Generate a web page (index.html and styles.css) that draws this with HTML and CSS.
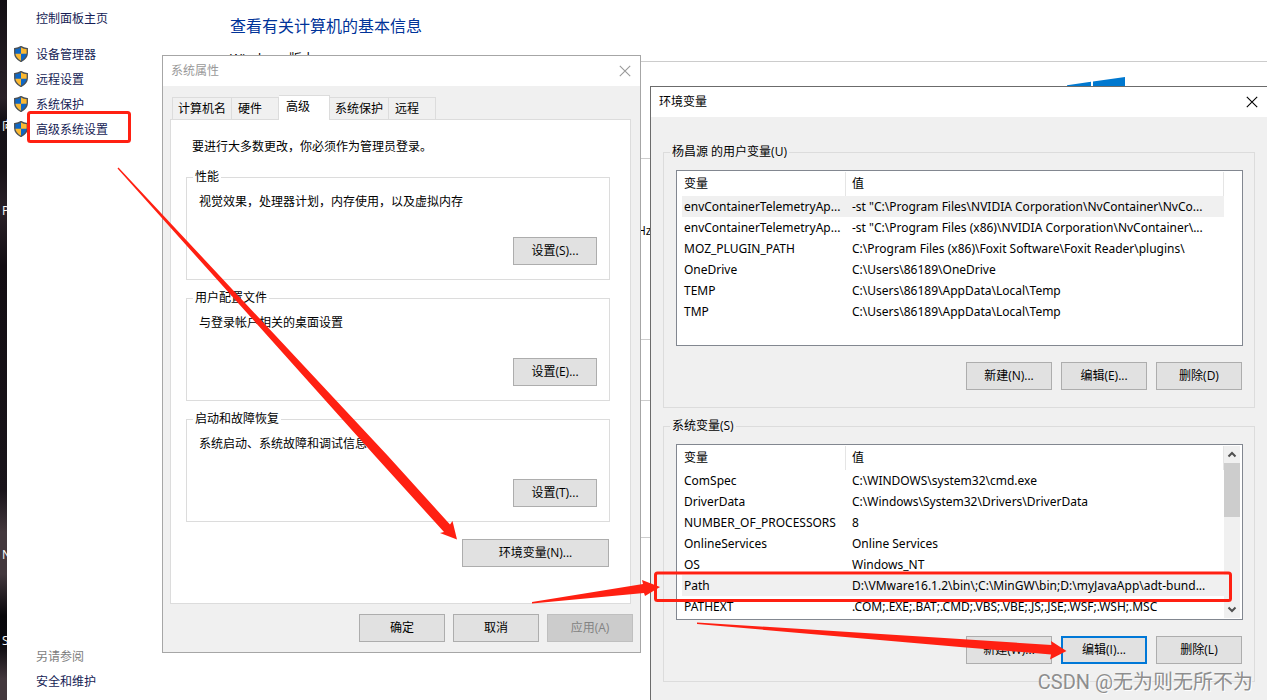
FILE: index.html
```html
<!DOCTYPE html>
<html lang="zh-CN">
<head>
<meta charset="utf-8">
<title>系统</title>
<link rel="stylesheet" href="styles.css">
</head>
<body>
<svg class="defs" aria-hidden="true">
  <symbol id="shield" viewBox="0 0 14 16">
    <path d="M7 0.6C5 2 3 2.5 0.7 2.6V7c0 4 2.600 6.500 6.300 8.500 3.700-2 6.300-4.500 6.300-8.500V2.600C11 2.500 9 2 7 .6z" fill="#fcb931"/>
    <path d="M7 .6C5 2 3 2.500.7 2.600V7.800H7z" fill="#0f67c4"/>
    <path d="M7 7.800h6.300C13 11.500 10.500 13.700 7 15.500z" fill="#0f67c4"/>
    <path d="M7 .6C5 2 3 2.500.7 2.600V7c0 4 2.600 6.500 6.300 8.500 3.700-2 6.300-4.500 6.300-8.500V2.600C11 2.500 9 2 7 .6z" fill="none" stroke="#4b5157" stroke-width="1.300"/>
  </symbol>
  <symbol id="cross" viewBox="0 0 12 12">
    <path d="M.8.8l10.400 10.400M11.200.8L.8 11.200" fill="none" stroke="currentColor" stroke-width="1.100"/>
  </symbol>
</svg>

<div class="screen">
  <div class="desktop">
    <span class="shortcut s1">向</span>
    <span class="shortcut s2">P</span>
    <span class="shortcut s3">N</span>
    <span class="shortcut s4">S</span>
  </div>

  <nav class="sidebar">
    <a class="home" href="#">控制面板主页</a>
    <ul class="tasks">
      <li><svg class="shield"><use href="#shield"/></svg><a href="#">设备管理器</a></li>
      <li><svg class="shield"><use href="#shield"/></svg><a href="#">远程设置</a></li>
      <li><svg class="shield"><use href="#shield"/></svg><a href="#">系统保护</a></li>
      <li><svg class="shield"><use href="#shield"/></svg><a href="#">高级系统设置</a></li>
    </ul>
    <div class="related">
      <span>另请参阅</span>
      <a href="#">安全和维护</a>
    </div>
  </nav>

  <main class="content">
    <h1>查看有关计算机的基本信息</h1>
    <section class="info edition">
      <h2>Windows 版本</h2>
      <svg class="winlogo" viewBox="0 0 58 58">
        <path d="M0 8.200L24 4.800V28H0zM26 4.500L58 0v28H26zM0 30h24v23.200L0 49.800zM26 30h32v28l-32-4.500z" fill="#0078cf"/>
      </svg>
    </section>
    <section class="info system"><p>Hz</p></section>
    <section class="info name"></section>
    <section class="info activation"></section>
    <section class="info"></section>
  </main>

  <section class="dialog props">
    <header class="titlebar inactive">
      <span>系统属性</span>
      <button class="close" aria-label="关闭"><svg><use href="#cross"/></svg></button>
    </header>
    <div class="tabs" role="tablist">
      <button role="tab">计算机名</button>
      <button role="tab" class="t2">硬件</button>
      <button role="tab" class="active" aria-selected="true">高级</button>
      <button role="tab">系统保护</button>
      <button role="tab" class="t2">远程</button>
    </div>
    <div class="pane">
      <p class="intro">要进行大多数更改，你必须作为管理员登录。</p>
      <fieldset>
        <legend>性能</legend>
        <p>视觉效果，处理器计划，内存使用，以及虚拟内存</p>
        <button class="btn">设置(S)...</button>
      </fieldset>
      <fieldset>
        <legend>用户配置文件</legend>
        <p>与登录帐户相关的桌面设置</p>
        <button class="btn">设置(E)...</button>
      </fieldset>
      <fieldset>
        <legend>启动和故障恢复</legend>
        <p>系统启动、系统故障和调试信息</p>
        <button class="btn">设置(T)...</button>
      </fieldset>
      <button class="btn envbtn">环境变量(N)...</button>
    </div>
    <footer class="actions">
      <button class="btn">确定</button>
      <button class="btn">取消</button>
      <button class="btn" disabled>应用(A)</button>
    </footer>
  </section>

  <section class="dialog env">
    <header class="titlebar">
      <span>环境变量</span>
      <button class="close" aria-label="关闭"><svg><use href="#cross"/></svg></button>
    </header>
    <div class="envbody">
      <fieldset>
        <legend>杨昌源 的用户变量(U)</legend>
        <div class="list">
          <table>
            <thead><tr><th class="var">变量</th><th>值</th></tr></thead>
            <tbody>
              <tr class="selected"><td>envContainerTelemetryAp...</td><td>-st "C:\Program Files\NVIDIA Corporation\NvContainer\NvCo...</td></tr>
              <tr><td>envContainerTelemetryAp...</td><td>-st "C:\Program Files (x86)\NVIDIA Corporation\NvContainer\...</td></tr>
              <tr><td>MOZ_PLUGIN_PATH</td><td>C:\Program Files (x86)\Foxit Software\Foxit Reader\plugins\</td></tr>
              <tr><td>OneDrive</td><td>C:\Users\86189\OneDrive</td></tr>
              <tr><td>TEMP</td><td>C:\Users\86189\AppData\Local\Temp</td></tr>
              <tr><td>TMP</td><td>C:\Users\86189\AppData\Local\Temp</td></tr>
            </tbody>
          </table>
        </div>
        <div class="actions">
          <button class="btn">新建(N)...</button>
          <button class="btn">编辑(E)...</button>
          <button class="btn">删除(D)</button>
        </div>
      </fieldset>
      <fieldset>
        <legend>系统变量(S)</legend>
        <div class="list">
          <table>
            <thead><tr><th class="var">变量</th><th>值</th></tr></thead>
            <tbody>
              <tr><td>ComSpec</td><td>C:\WINDOWS\system32\cmd.exe</td></tr>
              <tr><td>DriverData</td><td>C:\Windows\System32\Drivers\DriverData</td></tr>
              <tr><td>NUMBER_OF_PROCESSORS</td><td>8</td></tr>
              <tr><td>OnlineServices</td><td>Online Services</td></tr>
              <tr><td>OS</td><td>Windows_NT</td></tr>
              <tr class="selected"><td>Path</td><td>D:\VMware16.1.2\bin\;C:\MinGW\bin;D:\myJavaApp\adt-bund...</td></tr>
              <tr><td>PATHEXT</td><td>.COM;.EXE;.BAT;.CMD;.VBS;.VBE;.JS;.JSE;.WSF;.WSH;.MSC</td></tr>
            </tbody>
          </table>
          <div class="scrollbar">
            <svg viewBox="0 0 16 17"><path d="M4.500 10.500L8 7l3.500 3.500" fill="none" stroke="#505050" stroke-width="2"/></svg>
            <div class="thumb"></div>
            <svg class="down" viewBox="0 0 16 17"><path d="M4.500 6.500L8 10l3.500-3.500" fill="none" stroke="#505050" stroke-width="2"/></svg>
          </div>
        </div>
        <div class="actions">
          <button class="btn">新建(W)...</button>
          <button class="btn focused">编辑(I)...</button>
          <button class="btn">删除(L)</button>
        </div>
      </fieldset>
    </div>
  </section>

  <svg class="marks" width="1267" height="700" viewBox="0 0 1267 700" aria-hidden="true">
    <g fill="none" stroke="#ff2012" stroke-width="3">
      <rect x="28.500" y="112.500" width="101" height="29" rx="2"/>
      <rect x="655.500" y="573" width="575" height="27.500" rx="2"/>
    </g>
    <g fill="#ff2012">
      <path d="M117.500 168.500L118.500 167.500L388 456L450 524.500L452.500 521L457 539.500L440 533L444 532L376 457z"/>
      <path d="M532 602L643 584L642 580L660 587L645 596L644 593L532 603.500z"/>
      <path d="M697 622.500L960 639L1051.500 645L1051 641L1066.500 651L1050 659.500L1051 654.500L960 647L697 624z"/>
    </g>
  </svg>
  <div class="watermark">CSDN @无为则无所不为</div>
</div>
</body>
</html>
```

FILE: styles.css
```css
* { box-sizing: border-box; }

body {
  margin: 0;
  background: #fff;
  color: #000;
  font: 12px/16px "Open Sans", "Noto Sans CJK SC", sans-serif;
}

h1, h2, p, ul, fieldset, legend { margin: 0; padding: 0; font-weight: normal; }
ul { list-style: none; }
a { text-decoration: none; color: #151c55; }
button { font: inherit; color: inherit; }
.defs { position: absolute; width: 0; height: 0; }

.screen {
  position: relative;
  display: flex;
  height: 100vh;
  min-height: 700px;
  overflow: hidden;
}

/* desktop edge */
.desktop {
  position: relative;
  flex: none;
  width: 7px;
  overflow: hidden;
  background: linear-gradient(#120e13, #2a2228 14%, #151116 17%, #171217 24%, #2b2229 30%, #120d12 38%, #19141a 70%, #43383d 76%, #43383d 82%, #08070a 88%, #0b090d 92%, #43383d 97%);
  color: #fff;
}
.shortcut { position: absolute; left: 2px; }
.s1 { top: 118px; }
.s2 { top: 203px; }
.s3 { top: 547px; }
.s4 { top: 633px; }

/* control panel */
.sidebar {
  display: flex;
  flex-direction: column;
  flex: none;
  width: 193px;
  padding: 6px 0;
  line-height: 25px;
}
.home { padding-left: 29px; }
.tasks { padding-top: 11px; }
.tasks li { display: flex; align-items: center; gap: 8px; padding-left: 7px; }
.shield { width: 14px; height: 16px; margin-bottom: 2px; }
.related {
  display: flex;
  flex-direction: column;
  margin-top: auto;
  padding-left: 29px;
  color: #7d7d7d;
}
.content { flex: 1; padding: 14px 0 0 30px; }
.content h1 { font-size: 16px; line-height: 24px; color: #003399; }
.info { border-top: 1px solid #ccc; height: 137px; }
.edition { display: flex; height: 97px; margin-top: 23px; }
.edition h2 {
  align-self: flex-start;
  margin-top: -14px;
  padding-right: 8px;
  background: #fff;
  font-size: 13px;
  line-height: 20px;
}
.winlogo { width: 58px; height: 58px; margin: 15px 142px 0 auto; }
.system { height: 181px; padding: 64px 0 0 407px; }
.name { height: 61px; }

/* dialogs */
.dialog { position: absolute; background: #f0f0f0; }
.props { left: 162px; top: 55px; width: 479px; border: 1px solid #a6a6a6; }
.env {
  left: 650px;
  right: 0;
  top: 86px;
  bottom: 0;
  border: solid #6b6b6b;
  border-width: 1px 0 0 1px;
}
.titlebar {
  display: flex;
  align-items: center;
  justify-content: space-between;
  height: 30px;
  padding: 0 9px 0 8px;
  background: #fff;
}
.inactive { color: #999; }
.close { display: flex; padding: 0; border: 0; background: none; }
.close svg { width: 12px; height: 12px; }

.tabs { display: flex; align-items: flex-end; padding: 9px 9px 0; }
.tabs button {
  height: 22px;
  padding: 0 5px;
  border: 1px solid #dcdcdc;
  border-width: 1px 1px 0 0;
  background: #f0f0f0;
}
.tabs button:first-child { border-left-width: 1px; }
.tabs .t2 { padding: 0 16px 0 6px; }
.tabs .active {
  z-index: 1;
  height: 25px;
  margin-bottom: -1px;
  padding: 0 19px 3px 7px;
  background: #fff;
}
.pane {
  display: flex;
  flex-direction: column;
  gap: 10px;
  margin: 0 9px 0 7px;
  padding: 19px 20px 36px 15px;
  border: 1px solid #dcdcdc;
  background: #fff;
}
.intro { padding: 0 6px 4px; }

fieldset { min-width: 0; border: 1px solid #dcdcdc; }
legend { margin-left: 6px; padding: 0 2px; }
.pane fieldset {
  display: flex;
  flex-direction: column;
  gap: 27px;
  padding: 9px 12px 14px 12px;
}
.pane legend { margin-left: -6px; }
.pane fieldset .btn { align-self: flex-end; width: 84px; }

.btn {
  width: 86px;
  height: 28px;
  padding: 0;
  border: 1px solid #adadad;
  background: #e1e1e1;
}
.btn:disabled { border-color: #bfbfbf; background: #ccc; color: #838383; }
.focused { border: 2px solid #0078d7; }
.envbtn { align-self: flex-end; width: 147px; margin: 7px 1px 0 0; }
.actions { display: flex; justify-content: flex-end; gap: 9px; }
.props > .actions { gap: 8px; padding: 10px 7px; }

.envbody {
  display: flex;
  flex-direction: column;
  gap: 10px;
  padding: 27px 12px 0;
}
.envbody fieldset { padding: 10px 11px 17px 12px; }
.envbody legend { margin-left: -6px; }
.envbody .actions { padding: 16px 1px 0; }

.list {
  display: flex;
  height: 176px;
  padding: 1px 2px 1px 5px;
  border: 1px solid #828790;
  background: #fff;
  overflow: hidden;
}
table {
  flex: 1;
  align-self: flex-start;
  margin-right: 16px;
  table-layout: fixed;
  border-collapse: separate;
  border-spacing: 0;
  white-space: nowrap;
}
th, td { height: 21px; padding: 0 0 0 6px; text-align: left; font-weight: normal; }
th { height: 24px; border-right: 1px solid #e5e5e5; }
th:first-child, td:first-child { padding-left: 2px; }
.var { width: 164px; }
td { font-family: "Noto Sans", "Noto Sans CJK SC", sans-serif; }
.selected td { background: #f0f0f0; }

.scrollbar {
  display: flex;
  flex-direction: column;
  flex: none;
  width: 16px;
  margin-left: -16px;
  background: #f0f0f0;
}
.scrollbar svg { width: 16px; height: 17px; }
.thumb { height: 54px; background: #cdcdcd; }
.down { margin-top: auto; }

.marks { position: absolute; left: 0; top: 0; pointer-events: none; }
.watermark {
  position: absolute;
  right: 14px;
  bottom: 4px;
  color: #8e8e8e;
  font-family: Roboto, "Noto Sans CJK SC", sans-serif;
  font-size: 20px;
  line-height: 28px;
  text-shadow: 1px 1px #fff;
}
```
